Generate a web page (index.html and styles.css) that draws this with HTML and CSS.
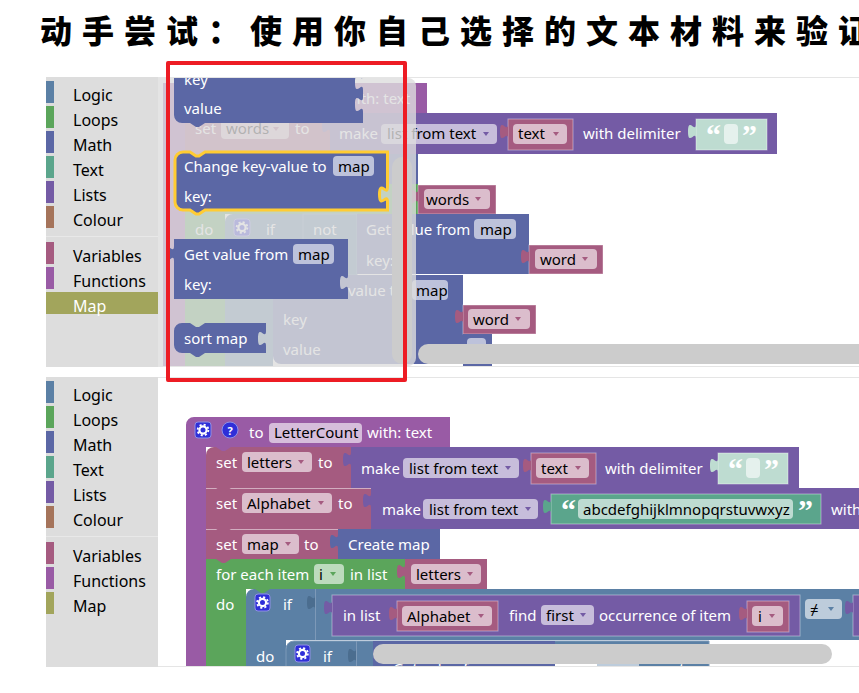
FILE: index.html
```html
<!DOCTYPE html>
<html lang="zh-CN">
<head>
    <meta charset="UTF-8">
    <title>动手尝试</title>
    <link rel="stylesheet" href="styles.css">
</head>
<body>
    <h1 class="title">动手尝试：使用你自己选择的文本材料来验证</h1>

    <!-- shared puzzle pieces -->
    <svg class="defs" width="0" height="0">
        <defs>
            <path id="tab" d="M0 0c0 10-8-8-8 7.5s8-2.500 8 7.500z"/>
            <path id="bump" d="M0 0l6 4h3l6-4z"/>
            <path id="arrow" d="M0 0h6l-3 4z"/>
            <g id="gear">
                <circle r="3.600" class="gear-ring"/>
                <circle r="5.400" class="gear-teeth"/>
            </g>
        </defs>
    </svg>

    <section class="panel">
        <div class="toolbox">
            <div class="cat"><span class="swatch logic"></span>Logic</div>
            <div class="cat"><span class="swatch loops"></span>Loops</div>
            <div class="cat"><span class="swatch math"></span>Math</div>
            <div class="cat"><span class="swatch text"></span>Text</div>
            <div class="cat"><span class="swatch lists"></span>Lists</div>
            <div class="cat"><span class="swatch colour"></span>Colour</div>
            <div class="sep"></div>
            <div class="cat"><span class="swatch vars"></span>Variables</div>
            <div class="cat"><span class="swatch funcs"></span>Functions</div>
            <div class="cat selected"><span class="swatch map"></span>Map</div>
        </div>
        <div class="workspace">
            <svg class="canvas" viewBox="158 78 701 288" width="701" height="288">
                <!-- workspace blocks behind the flyout -->
                <path class="b-func" d="M163 83H427V113H185V366H163Z"/>
                <text class="t" x="345" y="104">with: text</text>

                <path class="b-vars" d="M185 121a8 8 0 0 1 8-8H330V154H185Z"/>
                <use href="#bump" x="195" y="113" class="b-func"/>
                <text class="t" x="195" y="134">set</text>
                <rect class="fld" x="221" y="119" width="68" height="20" rx="4"/>
                <text class="f" x="226" y="134">words</text>
                <use href="#arrow" x="273" y="127" class="b-vars"/>
                <text class="t" x="295" y="134">to</text>

                <rect class="b-lists" x="330" y="113" width="447" height="41"/>
                <use href="#tab" x="330" y="118" class="b-lists"/>
                <text class="t" x="339" y="139">make</text>
                <rect class="fld" x="381" y="124" width="116" height="20" rx="4"/>
                <text class="f" x="387" y="139">list from text</text>
                <use href="#arrow" x="483" y="132" class="b-lists"/>
                <rect class="b-vars inset" x="508" y="119" width="65" height="31"/>
                <use href="#tab" x="508" y="124" class="b-vars"/>
                <rect class="fld" x="513" y="124" width="54" height="20" rx="4"/>
                <text class="f" x="518" y="139">text</text>
                <use href="#arrow" x="553" y="132" class="b-vars"/>
                <text class="t" x="583" y="139">with delimiter</text>
                <rect class="b-shadow inset" x="696" y="119" width="71" height="31"/>
                <use href="#tab" x="696" y="124" class="b-shadow"/>
                <text class="q" x="706" y="145">“</text>
                <rect class="fld" x="724" y="124" width="14" height="20" rx="4"/>
                <text class="q" x="742" y="145">”</text>

                <rect class="b-vars" x="185" y="154" width="155" height="30"/>
                <rect class="b-math" x="340" y="154" width="78" height="30"/>

                <rect class="b-loops" x="185" y="184" width="233" height="30"/>
                <rect class="b-loops" x="185" y="214" width="40" height="152"/>
                <rect class="b-vars inset" x="418" y="185" width="78" height="29"/>
                <use href="#tab" x="418" y="189" class="b-vars"/>
                <rect class="fld" x="424" y="189" width="66" height="20" rx="4"/>
                <text class="f" x="426" y="205">words</text>
                <use href="#arrow" x="475" y="197" class="b-vars"/>
                <text class="t" x="195" y="235">do</text>

                <path class="b-logic" d="M225 222a8 8 0 0 1 8-8H357V275H273V366H225Z"/>
                <rect class="b-logic-edge" x="303" y="214" width="54" height="61"/>
                <rect class="gear-box" x="234" y="219" width="16" height="17" rx="3"/>
                <use href="#gear" x="242" y="227.500"/>
                <text class="t" x="266" y="235">if</text>
                <text class="t" x="313" y="235">not</text>

                <rect class="b-math" x="357" y="214" width="172" height="60"/>
                <text class="t" x="366" y="235">Get value from</text>
                <text class="t" x="366" y="266">key:</text>
                <rect class="fld" x="474" y="219" width="42" height="20" rx="4"/>
                <text class="f" x="480" y="235">map</text>
                <rect class="b-vars inset" x="529" y="245" width="74" height="29"/>
                <use href="#tab" x="529" y="249" class="b-vars"/>
                <rect class="fld" x="535" y="249" width="62" height="20" rx="4"/>
                <text class="f" x="540" y="265">word</text>
                <use href="#arrow" x="582" y="257" class="b-vars"/>

                <path class="b-math" d="M273 275H463V364H281a8 8 0 0 1-8-8Z"/>
                <text class="t" x="348" y="296">value to</text>
                <rect class="fld" x="412" y="280" width="36" height="20" rx="4"/>
                <text class="f" x="416" y="296">map</text>
                <text class="t" x="283" y="325">key</text>
                <text class="t" x="283" y="355">value</text>
                <rect class="b-vars inset" x="463" y="305" width="73" height="29"/>
                <use href="#tab" x="463" y="309" class="b-vars"/>
                <rect class="fld" x="468" y="309" width="62" height="20" rx="4"/>
                <text class="f" x="473" y="325">word</text>
                <use href="#arrow" x="515" y="317" class="b-vars"/>
                <rect class="b-math" x="463" y="334" width="29" height="32"/>
                <rect class="fld" x="467" y="338" width="19" height="20" rx="4"/>

                <!-- flyout -->
                <path class="flyout" d="M158 78H408a8 8 0 0 1 8 8V358a8 8 0 0 1-8 8H158Z"/>
                <rect class="scroll" x="392" y="157" width="20" height="207" rx="10"/>

                <path class="b-math" d="M174 70H363V75c0 10-8-8-8 7.500s8-2.500 8 7.500V97c0 10-8-8-8 7.500s8-2.500 8 7.500V123H205l-6 4h-3l-6-4H182a8 8 0 0 1-8-8Z"/>
                <text class="t" x="184" y="85">key</text>
                <text class="t" x="184" y="114">value</text>

                <path class="b-math picked" d="M175 160a8 8 0 0 1 8-8h7l6 4h3l6-4H387.500V187c0 10-8-8-8 7.500s8-2.500 8 7.500v8H205l-6 4h-3l-6-4H183a8 8 0 0 1-8-8Z"/>
                <text class="t" x="184" y="172">Change key-value to</text>
                <rect class="fld" x="333" y="156" width="41" height="20" rx="4"/>
                <text class="f" x="338" y="172">map</text>
                <text class="t" x="184" y="202">key:</text>

                <path class="b-math" d="M174 239H348V275c0 10-8-8-8 7.500s8-2.500 8 7.500V299H174V261c0-10-8 8-8-7.500s8 2.500 8-7.500Z"/>
                <text class="t" x="184" y="260">Get value from</text>
                <rect class="fld" x="293" y="244" width="41" height="20" rx="4"/>
                <text class="f" x="298" y="260">map</text>
                <text class="t" x="184" y="290">key:</text>

                <path class="b-math" d="M174 331a8 8 0 0 1 8-8h8l6 4h3l6-4h61v8c0 10-8-8-8 7.500s8-2.500 8 7.500v7H205l-6 4h-3l-6-4H182a8 8 0 0 1-8-8Z"/>
                <text class="t" x="184" y="344">sort map</text>

                <rect class="scroll" x="418" y="344" width="460" height="20" rx="10"/>
            </svg>
        </div>
    </section>

    <section class="panel">
        <div class="toolbox">
            <div class="cat"><span class="swatch logic"></span>Logic</div>
            <div class="cat"><span class="swatch loops"></span>Loops</div>
            <div class="cat"><span class="swatch math"></span>Math</div>
            <div class="cat"><span class="swatch text"></span>Text</div>
            <div class="cat"><span class="swatch lists"></span>Lists</div>
            <div class="cat"><span class="swatch colour"></span>Colour</div>
            <div class="sep"></div>
            <div class="cat"><span class="swatch vars"></span>Variables</div>
            <div class="cat"><span class="swatch funcs"></span>Functions</div>
            <div class="cat"><span class="swatch map"></span>Map</div>
        </div>
        <div class="workspace">
            <svg class="canvas" viewBox="158 378 701 288" width="701" height="288">
                <!-- function header -->
                <path class="b-func" d="M186 425a8 8 0 0 1 8-8H450V447H206V666H186Z"/>
                <rect class="gear-box" x="195" y="422" width="16" height="16" rx="3"/>
                <use href="#gear" x="203" y="430"/>
                <circle class="gear-box" cx="230" cy="430" r="8"/>
                <text class="help" x="230" y="434.500">?</text>
                <text class="t" x="249" y="438">to</text>
                <rect class="fld" x="269" y="423" width="93" height="20" rx="4"/>
                <text class="f" x="274" y="438">LetterCount</text>
                <text class="t" x="367" y="438">with: text</text>

                <!-- set letters -->
                <path class="b-vars" d="M206 455a8 8 0 0 1 8-8H351V488H206Z"/>
                <use href="#bump" x="216" y="447" class="b-func"/>
                <text class="t" x="216" y="468">set</text>
                <rect class="fld" x="242" y="452" width="70" height="20" rx="4"/>
                <text class="f" x="247" y="468">letters</text>
                <use href="#arrow" x="298" y="460" class="b-vars"/>
                <text class="t" x="318" y="468">to</text>

                <rect class="b-lists" x="351" y="447" width="448" height="41"/>
                <use href="#tab" x="351" y="452" class="b-lists"/>
                <text class="t" x="361" y="474">make</text>
                <rect class="fld" x="403" y="458" width="116" height="20" rx="4"/>
                <text class="f" x="409" y="474">list from text</text>
                <use href="#arrow" x="505" y="466" class="b-lists"/>
                <rect class="b-vars inset" x="531" y="453" width="65" height="31"/>
                <use href="#tab" x="531" y="458" class="b-vars"/>
                <rect class="fld" x="536" y="458" width="53" height="20" rx="4"/>
                <text class="f" x="541" y="474">text</text>
                <use href="#arrow" x="575" y="466" class="b-vars"/>
                <text class="t" x="605" y="474">with delimiter</text>
                <rect class="b-shadow inset" x="718" y="453" width="70" height="31"/>
                <use href="#tab" x="718" y="458" class="b-shadow"/>
                <text class="q" x="728" y="479">“</text>
                <rect class="fld" x="746" y="458" width="14" height="20" rx="4"/>
                <text class="q" x="764" y="479">”</text>

                <!-- set Alphabet -->
                <rect class="b-vars" x="206" y="488" width="165" height="41"/>
                <line class="light" x1="206" y1="488.500" x2="371" y2="488.500"/>
                <use href="#bump" x="216" y="488" class="b-vars"/>
                <text class="t" x="216" y="509">set</text>
                <rect class="fld" x="242" y="493" width="90" height="20" rx="4"/>
                <text class="f" x="247" y="509">Alphabet</text>
                <use href="#arrow" x="318" y="501" class="b-vars"/>
                <text class="t" x="338" y="509">to</text>

                <rect class="b-lists" x="371" y="488" width="500" height="41"/>
                <use href="#tab" x="371" y="493" class="b-lists"/>
                <text class="t" x="382" y="515">make</text>
                <rect class="fld" x="423" y="499" width="115" height="20" rx="4"/>
                <text class="f" x="429" y="515">list from text</text>
                <use href="#arrow" x="525" y="507" class="b-lists"/>
                <rect class="b-text inset" x="551" y="494" width="270" height="30"/>
                <use href="#tab" x="551" y="499" class="b-text"/>
                <text class="q" x="561" y="520">“</text>
                <rect class="fld" x="578" y="499" width="215" height="20" rx="4"/>
                <text class="f" x="583" y="515">abcdefghijklmnopqrstuvwxyz</text>
                <text class="q" x="798" y="520">”</text>
                <text class="t" x="831" y="515">with</text>

                <!-- set map -->
                <rect class="b-vars" x="206" y="529" width="132" height="30"/>
                <line class="light" x1="206" y1="529.500" x2="338" y2="529.500"/>
                <use href="#bump" x="216" y="529" class="b-vars"/>
                <text class="t" x="216" y="550">set</text>
                <rect class="fld" x="242" y="534" width="57" height="20" rx="4"/>
                <text class="f" x="247" y="550">map</text>
                <use href="#arrow" x="285" y="542" class="b-vars"/>
                <text class="t" x="304" y="550">to</text>
                <rect class="b-math" x="338" y="529" width="102" height="30"/>
                <use href="#tab" x="338" y="534" class="b-math"/>
                <text class="t" x="348" y="550">Create map</text>

                <!-- for each -->
                <path class="b-loops" d="M206 559H405V589H246V666H206Z"/>
                <use href="#bump" x="216" y="559" class="b-vars"/>
                <text class="t" x="216" y="580">for each item</text>
                <rect class="fld" x="314" y="564" width="30" height="20" rx="4"/>
                <text class="f" x="319" y="580">i</text>
                <use href="#arrow" x="330" y="572" class="b-loops"/>
                <text class="t" x="350" y="580">in list</text>
                <rect class="b-vars" x="405" y="559" width="82" height="30"/>
                <use href="#tab" x="405" y="564" class="b-vars"/>
                <rect class="fld" x="411" y="564" width="70" height="20" rx="4"/>
                <text class="f" x="416" y="580">letters</text>
                <use href="#arrow" x="467" y="572" class="b-vars"/>
                <text class="t" x="216" y="610">do</text>

                <!-- outer if -->
                <path class="b-logic" d="M246 597a8 8 0 0 1 8-8H880V640H286V666H246Z"/>
                <use href="#bump" x="255" y="589" class="b-loops"/>
                <rect class="gear-box" x="255" y="594" width="15" height="17" rx="3"/>
                <use href="#gear" x="262.500" y="602.500"/>
                <text class="t" x="283" y="610">if</text>
                <line class="seam" x1="315.500" y1="589" x2="315.500" y2="640"/>
                <use href="#tab" x="315" y="595" class="b-logic-dark"/>
                <text class="t" x="256" y="662">do</text>

                <rect class="b-lists inset" x="332" y="595" width="468" height="41"/>
                <use href="#tab" x="332" y="600" class="b-lists"/>
                <text class="t" x="343" y="621">in list</text>
                <rect class="b-vars inset" x="397" y="601" width="101" height="30"/>
                <use href="#tab" x="397" y="606" class="b-vars"/>
                <rect class="fld" x="402" y="606" width="90" height="20" rx="4"/>
                <text class="f" x="407" y="622">Alphabet</text>
                <use href="#arrow" x="478" y="614" class="b-vars"/>
                <text class="t" x="509" y="621">find</text>
                <rect class="fld" x="541" y="605" width="53" height="20" rx="4"/>
                <text class="f" x="546" y="621">first</text>
                <use href="#arrow" x="580" y="613" class="b-lists"/>
                <text class="t" x="599" y="621">occurrence of item</text>
                <rect class="b-vars inset" x="747" y="601" width="42" height="31"/>
                <use href="#tab" x="747" y="606" class="b-vars"/>
                <rect class="fld" x="752" y="606" width="31" height="20" rx="4"/>
                <text class="f" x="758" y="622">i</text>
                <use href="#arrow" x="769" y="614" class="b-vars"/>

                <rect class="fld" x="805" y="599" width="37" height="20" rx="4"/>
                <text class="f" x="810" y="615">≠</text>
                <use href="#arrow" x="828" y="607" class="b-logic"/>
                <rect class="b-lists inset" x="853" y="595" width="30" height="41"/>
                <use href="#tab" x="853" y="600" class="b-lists"/>

                <!-- inner if, mostly under the scrollbar -->
                <path class="b-logic b-logic-edge" d="M286 649a8 8 0 0 1 8-8H709V670H286Z"/>
                <rect class="gear-box" x="295" y="645" width="15" height="17" rx="3"/>
                <use href="#gear" x="302.500" y="653.500"/>
                <text class="t" x="323" y="662">if</text>
                <line class="seam" x1="356.500" y1="641" x2="356.500" y2="666"/>
                <use href="#tab" x="356" y="648" class="b-logic-dark"/>
                <rect class="b-math" x="373" y="641" width="182" height="30"/>
                <text class="t" x="393" y="674">Get value from map</text>
                <rect class="blank" x="555" y="664" width="42" height="3"/>
                <rect class="fld" x="597" y="662" width="42" height="6"/>
                <text class="t" x="661" y="674">not</text>

                <rect class="scroll" x="373" y="644" width="459" height="20" rx="10"/>
            </svg>
        </div>
    </section>

    <!-- hand-drawn marker over the first flyout -->
    <div class="marker"></div>
</body>
</html>
```

FILE: styles.css
```css
html, body {
    margin: 0;
    height: 100%;
    overflow: hidden;
    background: #fff;
}
body {
    position: relative;
    font-family: "Noto Sans", "Noto Sans CJK SC", sans-serif;
}
.title {
    margin: 0;
    height: 67px;
    padding: 0 0 10px 40px;
    box-sizing: border-box;
    font-family: "Noto Sans CJK SC", "Noto Sans", sans-serif;
    font-size: 32px;
    font-weight: 900;
    line-height: 59px;
    letter-spacing: 10px;
    white-space: nowrap;
    color: #000;
}
.defs {
    position: absolute;
}
.panel {
    display: flex;
    height: 290px;
    margin: 10px 0 10px 46px;
}
.toolbox {
    flex: 0 0 112px;
    padding-top: 4px;
    box-sizing: border-box;
    background: #ddd;
}
.cat {
    display: flex;
    height: 22px;
    margin-bottom: 3px;
    font-size: 16px;
    line-height: 28px;
    color: #000;
}
.cat.selected {
    background: #a2a55c;
    color: #fff;
}
.swatch {
    width: 8px;
    height: 22px;
    margin-right: 19px;
}
.sep {
    height: 1px;
    margin: 8px 0 5px;
    background: #e8e8e8;
}
.logic { background: #5b80a5; }
.loops { background: #5ba55b; }
.math { background: #5b67a5; }
.text { background: #5ba58c; }
.lists { background: #745ba5; }
.colour { background: #a5745b; }
.vars { background: #a55b80; }
.funcs { background: #995ba5; }
.map { background: #a2a55c; }

.workspace {
    flex: 1;
    height: 290px;
    box-sizing: border-box;
    border-top: 1px solid #e5e5e5;
    border-bottom: 1px solid #e5e5e5;
    overflow: hidden;
}
.canvas {
    display: block;
}
.canvas text {
    font-family: "Noto Sans", sans-serif;
    font-size: 15px;
}
.canvas .t { fill: #fff; }
.canvas .f { fill: #000; }
.canvas .q {
    font-family: "Liberation Serif", serif;
    font-size: 30px;
    font-weight: 700;
    fill: #fff;
}
.canvas .help {
    font-size: 11px;
    font-weight: 700;
    fill: #fff;
    text-anchor: middle;
}
.fld { fill: #fff; fill-opacity: 0.6; }
.blank { fill: #fff; }
.b-logic { fill: #5b80a5; }
.b-logic-dark { fill: #4b6d8f; }
.b-logic-edge { fill: #5b80a5; stroke: #7d99b8; stroke-width: 1; }
.b-loops { fill: #5ba55b; }
.b-math { fill: #5b67a5; }
.b-text { fill: #5ba58c; }
.b-lists { fill: #745ba5; }
.b-vars { fill: #a55b80; }
.b-func { fill: #995ba5; }
.b-shadow { fill: #bedcd1; }
.inset { stroke: #fff; stroke-opacity: 0.4; stroke-width: 1; }
.light { stroke: #fff; stroke-opacity: 0.5; stroke-width: 1; }
.seam { stroke: #7d99b8; stroke-width: 1; }
.picked { stroke: #fc3; stroke-width: 3; }
.gear-box { fill: #2f2fd8; stroke: #8f8fe6; stroke-width: 1; }
.gear-ring { fill: none; stroke: #fff; stroke-width: 2.200; }
.gear-teeth { fill: none; stroke: #fff; stroke-width: 1.800; stroke-dasharray: 2.100 2.140; }
.flyout { fill: #ddd; fill-opacity: 0.8; }
.scroll { fill: #ccc; }
.marker {
    position: absolute;
    left: 166px;
    top: 61px;
    width: 241px;
    height: 321px;
    box-sizing: border-box;
    border: 4px solid #ed1c24;
    border-radius: 2px;
}
```
